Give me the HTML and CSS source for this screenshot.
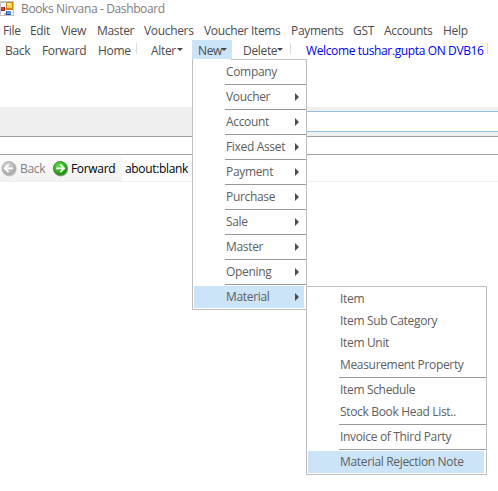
FILE: index.html
```html
<!DOCTYPE html>
<html lang="en">
<head>
<meta charset="utf-8">
<title>Books Nirvana - Dashboard</title>
<link rel="stylesheet" href="styles.css">
</head>
<body>
<header class="titlebar">
<svg class="appicon" width="14" height="15" viewBox="0 0 14 15" shape-rendering="crispEdges"><path fill="#c2c2c2" d="M0 0h14v15H0z"/><path fill="#fff" d="M1 2h12v12H1z"/><path fill="#b9b9b9" d="M4 12h2v2H4z"/><path fill="#a32118" d="M1 6h4v4H1z"/><path fill="#df3a26" d="M1 6h3v3H1z"/><path fill="#c88912" d="M6 1h7v8H6z"/><path fill="#ffd34f" d="M7 2h5v5H7z"/><path fill="#fff0a0" d="M7 2h3v2H7z"/><path fill="#2859b2" d="M6 10h5v4H6z"/><path fill="#5b8fe8" d="M7 10h4v3H7z"/></svg>
<span>Books Nirvana - Dashboard</span>
</header>
<nav class="menubar">
<span class="m-file">File</span><span class="m-edit">Edit</span><span class="m-view">View</span><span class="m-master">Master</span><span class="m-vouchers">Vouchers</span><span class="m-items">Voucher Items</span><span class="m-payments">Payments</span><span class="m-gst">GST</span><span class="m-accounts">Accounts</span><span class="m-help">Help</span>
</nav>
<div class="toolbar">
<span class="t-back">Back</span><span class="t-forward">Forward</span><span class="t-home">Home</span><i class="divider"></i>
<span class="t-alter">Alter<i class="caret"></i></span>
<div class="t-new">New<i class="caret"></i>
<div class="menu main-menu">
<div class="item">Company</div><hr>
<div class="item">Voucher<i class="arrow"></i></div><hr>
<div class="item">Account<i class="arrow"></i></div><hr>
<div class="item">Fixed Asset<i class="arrow"></i></div><hr>
<div class="item">Payment<i class="arrow"></i></div><hr>
<div class="item">Purchase<i class="arrow"></i></div><hr>
<div class="item">Sale<i class="arrow"></i></div><hr>
<div class="item">Master<i class="arrow"></i></div><hr>
<div class="item">Opening<i class="arrow"></i></div><hr>
<div class="item active">Material<i class="arrow"></i></div>
<div class="menu sub-menu">
<div class="item">Item</div>
<div class="item">Item Sub Category</div>
<div class="item">Item Unit</div>
<div class="item">Measurement Property</div><hr>
<div class="item">Item Schedule</div>
<div class="item">Stock Book Head List..</div><hr>
<div class="item">Invoice of Third Party</div><hr>
<div class="item active">Material Rejection Note</div>
</div>
</div>
</div>
<span class="t-delete">Delete<i class="caret"></i></span><i class="divider"></i>
<span class="welcome">Welcome tushar.gupta ON DVB16</span><i class="divider"></i>
</div>
<div class="tabstrip"><div class="field"></div></div>
<div class="gap"></div>
<div class="browserbar">
<div class="browser-tools">
<svg width="18" height="18" viewBox="0 0 18 18"><defs><radialGradient id="gray" cx=".4" cy=".3" r=".7"><stop stop-color="#d8d8d8"/><stop offset="1" stop-color="#a6a6a6"/></radialGradient></defs><circle cx="8.4" cy="9" r="7.4" fill="#c9c9c9"/><circle cx="7.8" cy="8.3" r="6.8" fill="url(#gray)" stroke="#ababab" stroke-width=".8"/><path d="M12 8.3H4M7.6 4.5l-3.8 3.8 3.8 3.8" fill="none" stroke="#fff" stroke-width="1.7"/></svg>
<span class="b-back">Back</span>
<svg width="18" height="18" viewBox="0 0 18 18"><defs><radialGradient id="green" cx=".4" cy=".3" r=".75"><stop stop-color="#65d94b"/><stop offset=".6" stop-color="#2cb51c"/><stop offset="1" stop-color="#12820b"/></radialGradient></defs><circle cx="8.8" cy="9" r="7.4" fill="#91a88d"/><circle cx="8.2" cy="8.3" r="6.8" fill="url(#green)" stroke="#268a1c" stroke-width=".8"/><path d="M4 8.3h8M8.4 4.5l3.8 3.8-3.8 3.8" fill="none" stroke="#fff" stroke-width="1.7"/></svg>
<span class="b-forward">Forward</span>
</div>
<div class="address">about:blank</div>
</div>
</body>
</html>
```
FILE: styles.css
```css
* { box-sizing: border-box; }
body {
  margin: 0;
  width: 498px;
  height: 491px;
  overflow: hidden;
  background: #fff;
  color: #4c4c4c;
  font: 12px/20px "Open Sans", "Noto Sans", sans-serif;
  letter-spacing: -0.33px;
  white-space: nowrap;
}
.titlebar { display: flex; height: 20px; line-height: 18px; color: #808080; letter-spacing: -0.37px; }
.appicon { margin: 1px 7px 0 0; }
.menubar { display: flex; height: 20px; padding-left: 3px; line-height: 22px; }
.menubar span { flex: none; }
.m-file { width: 27px; }
.m-edit { width: 31px; }
.m-view { width: 36px; }
.m-master { width: 47px; }
.m-vouchers { width: 60px; }
.m-items { width: 87px; }
.m-payments { width: 62px; }
.m-gst { width: 31px; }
.m-accounts { width: 59px; }
.toolbar { display: flex; height: 67px; padding-left: 5px; line-height: 22px; }
.toolbar > * { flex: none; }
.t-back { width: 37px; }
.t-forward { width: 56px; }
.t-home { width: 38px; }
.divider { width: 1px; height: 11px; margin-top: 3px; background: #dcdcdc; }
.caret {
  position: absolute;
  right: 5px;
  top: 8px;
  border: 3px solid transparent;
  border-top-color: #444;
  border-bottom: 0;
}
.t-alter { position: relative; width: 55px; padding-left: 14px; }
.t-alter .caret { right: 9px; }
.t-new { position: relative; width: 40px; height: 19px; padding-left: 6px; background: #cce4f7; }
.t-delete { position: relative; width: 58px; padding-left: 11px; }
.t-delete .caret { right: 7px; }
.welcome { width: 196px; padding-left: 15px; color: #00f; letter-spacing: -0.37px; }
.menu {
  position: absolute;
  z-index: 2;
  padding: 1px;
  background: #fff;
  border: 1px solid #bfbfbf;
  color: #606060;
  line-height: 22px;
}
.main-menu { left: 0; top: 19px; width: 115px; height: 251px; }
.main-menu::before { content: ""; position: absolute; left: 0; top: -1px; width: 38px; height: 1px; background: #fff; }
.sub-menu { left: 113px; top: 226px; width: 181px; height: 189px; }
.item { position: relative; height: 22px; padding-left: 32px; }
.item.active::before { content: ""; position: absolute; z-index: -1; inset: 0 1px 0 0; background: #cce4f7; }
.menu hr { height: 1px; margin: 1px -1px 1px 31px; border: 0; background: #999; }
.arrow {
  position: absolute;
  right: 6px;
  top: 7px;
  border: 4px solid transparent;
  border-left-color: #4c4c4c;
  border-right: 0;
}
.tabstrip { height: 30px; padding: 4px 0 0 200px; background: #efefef; border-bottom: 1px solid #a0a0a0; }
.field { height: 21px; background: #fff; border: 1px solid #91bfdf; border-width: 1px 0; }
.gap { height: 18px; border-bottom: 1px solid #a0a0a0; }
.browserbar { display: flex; height: 27px; border-bottom: 1px solid #f0f0f0; }
.browser-tools { display: flex; width: 122px; padding: 5px 0 0 1px; background: linear-gradient(#fdfdfd, #f2f2f2); line-height: 18px; }
.browser-tools > * { flex: none; }
.b-back { width: 33px; padding-left: 1px; color: #808080; }
.b-forward { padding-left: 1px; color: #000; }
.address { padding: 5px 0 0 3px; line-height: 18px; color: #000; }
```
